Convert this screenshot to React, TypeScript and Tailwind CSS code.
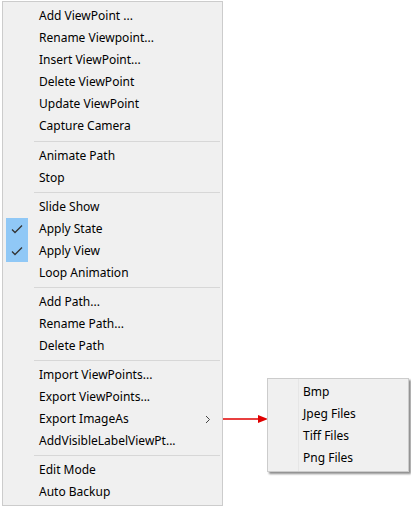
import React from "react";

type Item = { label: string; checked?: boolean; sub?: boolean } | "sep";

const items: Item[] = [
  { label: "Add ViewPoint ..." },
  { label: "Rename Viewpoint..." },
  { label: "Insert ViewPoint..." },
  { label: "Delete ViewPoint" },
  { label: "Update ViewPoint" },
  { label: "Capture Camera" },
  "sep",
  { label: "Animate Path" },
  { label: "Stop" },
  "sep",
  { label: "Slide Show" },
  { label: "Apply State", checked: true },
  { label: "Apply View", checked: true },
  { label: "Loop Animation" },
  "sep",
  { label: "Add Path..." },
  { label: "Rename Path..." },
  { label: "Delete Path" },
  "sep",
  { label: "Import ViewPoints..." },
  { label: "Export ViewPoints..." },
  { label: "Export ImageAs", sub: true },
  { label: "AddVisibleLabelViewPt..." },
  "sep",
  { label: "Edit Mode" },
  { label: "Auto Backup" },
];

const subItems = ["Bmp", "Jpeg Files", "Tiff Files", "Png Files"];

function Check() {
  return (
    <svg width="22" height="22" viewBox="0 0 22 22">
      <path d="M6 11.5 L9 14.5 L16 7.5" fill="none" stroke="#333" strokeWidth="1.3" />
    </svg>
  );
}

export default function App() {
  let sepIdx = 0;
  return (
    <div
      className="relative w-[411px] h-[508px] bg-white text-[12px] text-black"
      style={{ fontFamily: '"Segoe UI", "Noto Sans", sans-serif' }}
    >
      <div className="absolute left-[2px] top-[1px] w-[221px] border border-[#cccccc] bg-[#f0f0f0] pt-[3px] pb-[2px]">
        {items.map((it, i) => {
          if (it === "sep") {
            const first = sepIdx++ === 0;
            return (
              <div
                key={i}
                className={first ? "h-[8px] flex items-center pl-[31px] pr-[2px]" : "h-[7px] flex items-center pl-[31px] pr-[2px]"}
              >
                <div className="h-px w-full bg-[#d7d7d7]" />
              </div>
            );
          }
          return (
            <div key={i} className="relative h-[22px] flex items-center">
              <div className="w-[22px] h-[22px] ml-[3px] mr-[11px] flex items-center justify-center">
                {it.checked && (
                  <div className="w-[22px] h-[22px] bg-[#90c8f6]">
                    <Check />
                  </div>
                )}
              </div>
              <span className="leading-[22px] whitespace-nowrap">{it.label}</span>
              {it.sub && (
                <svg className="absolute left-[202px] top-[7px]" width="6" height="9" viewBox="0 0 6 9">
                  <path d="M1 1 L4.5 4.5 L1 8" fill="none" stroke="#444" strokeWidth="1" />
                </svg>
              )}
            </div>
          );
        })}
      </div>

      {/* red annotation arrow */}
      <svg className="absolute left-[222px] top-[413px]" width="48" height="12" viewBox="0 0 48 12">
        <line x1="1" y1="6" x2="38" y2="6" stroke="#e00000" strokeWidth="1.5" />
        <path d="M36 2 L46 6 L36 10 Z" fill="#e00000" />
      </svg>

      {/* submenu */}
      <div className="absolute left-[267px] top-[378px] w-[142px] border border-[#cccccc] bg-[#f0f0f0] pt-[2px] pb-[2px] shadow-[2px_2px_2px_rgba(0,0,0,0.45)]">
        <div className="absolute left-[30px] top-0 bottom-0 w-px bg-[#e6e6e6]" />
        {subItems.map((s) => (
          <div key={s} className="h-[22px] flex items-center pl-[35px] leading-[22px] whitespace-nowrap">
            {s}
          </div>
        ))}
      </div>
    </div>
  );
}
